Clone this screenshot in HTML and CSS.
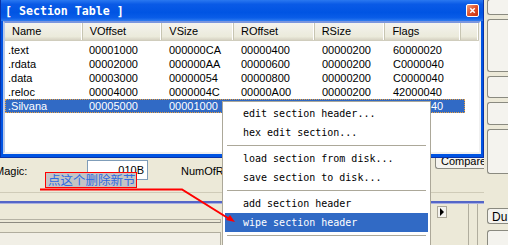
FILE: index.html
```html
<!DOCTYPE html>
<html>
<head>
<meta charset="utf-8">
<link rel="stylesheet" href="styles.css">
</head>
<body>
<div class="app">
  <div class="main">
    <div class="win">
      <div class="titlebar">
        <span class="title">[ Section Table ]</span>
        <span class="close"><svg width="12" height="12" viewBox="0 0 12 12"><path d="M3 3 L9 9 M9 3 L3 9" stroke="#fff" stroke-width="2" fill="none"/></svg></span>
      </div>
      <div class="list">
        <div class="hdr">
          <div class="hc w1">Name</div><div class="hc w2">VOffset</div><div class="hc w3">VSize</div><div class="hc w4">ROffset</div><div class="hc w5">RSize</div><div class="hc w6">Flags</div><div class="hc w7"></div>
        </div>
        <div class="row"><span class="w1">.text</span><span class="w2">00001000</span><span class="w3">000000CA</span><span class="w4">00000400</span><span class="w5">00000200</span><span class="w6">60000020</span></div>
        <div class="row"><span class="w1">.rdata</span><span class="w2">00002000</span><span class="w3">000000AA</span><span class="w4">00000600</span><span class="w5">00000200</span><span class="w6">C0000040</span></div>
        <div class="row"><span class="w1">.data</span><span class="w2">00003000</span><span class="w3">00000054</span><span class="w4">00000800</span><span class="w5">00000200</span><span class="w6">C0000040</span></div>
        <div class="row"><span class="w1">.reloc</span><span class="w2">00004000</span><span class="w3">0000004C</span><span class="w4">00000A00</span><span class="w5">00000200</span><span class="w6">42000040</span></div>
        <div class="row sel"><span class="w1">.Silvana</span><span class="w2">00005000</span><span class="w3">00001000</span><span class="w4">00000C00</span><span class="w5">00000200</span><span class="w6">E0000040</span></div>
      </div>
    </div>
    <div class="panel">
      <div class="fields">
        <span class="lbl">Magic:</span>
        <span class="input">010B</span>
        <span class="lbl2">NumOfRvaAndSizes:</span>
        <span class="cmp">Compare</span>
      </div>
      <div class="bluebar"></div>
      <div class="bottom">
        <div class="bl">
          <div class="grooves"></div>
          <div class="lower"></div>
        </div>
        <div class="bmid"></div>
        <div class="br">
          <span class="arr"><svg width="6" height="8" viewBox="0 0 6 8"><path d="M1 0 L5 4 L1 8 Z" fill="#000"/></svg></span>
          <span class="vl v1"></span>
          <span class="vl v2"></span>
        </div>
      </div>
    </div>
  </div>
  <div class="side">
    <div class="sbtn b1"></div>
    <div class="sbtn b2"></div>
    <div class="sbtn b3"></div>
    <div class="sbtn b4"></div>
    <div class="sbtn b5"></div>
    <div class="sbtn b6">Du</div>
    <div class="sbtn b7"></div>
  </div>
</div>

<div class="menu">
  <div class="mi">edit section header...</div>
  <div class="mi">hex edit section...</div>
  <div class="msep"></div>
  <div class="mi">load section from disk...</div>
  <div class="mi">save section to disk...</div>
  <div class="msep"></div>
  <div class="mi">add section header</div>
  <div class="mi hot">wipe section header</div>
  <div class="msep"></div>
  <div class="mi">&nbsp;</div>
</div>

<div class="note">点这个删除新节</div>
<svg class="arrow" width="508" height="245" viewBox="0 0 508 245">
  <polyline points="40,189.5 182,189.5 231,220" fill="none" stroke="#f00" stroke-width="2"/>
  <polygon points="235,222 226,220 230,215" fill="#f00"/>
</svg>
</body>
</html>
```

FILE: styles.css
```css
* { box-sizing: border-box; }
html, body { margin: 0; padding: 0; }
body {
  width: 508px;
  height: 245px;
  overflow: hidden;
  background: #ece9d8;
  font-family: "Liberation Sans", Arial, sans-serif;
  font-size: 11px;
  color: #000;
  position: relative;
}
.app { display: flex; width: 508px; height: 245px; }
.main { width: 484px; display: flex; flex-direction: column; }
.win {
  position: relative;
  z-index: 2;
  height: 158px;
  background: #0054e3;
  border: 1px solid #0831a8;
  border-top: none;
  display: flex;
  flex-direction: column;
  padding: 0 2px 3px 2px;
}
.titlebar {
  height: 21px;
  margin: 0 -2px;
  background: linear-gradient(#2a78f0 0%, #0a5ae6 20%, #0054e3 60%, #0a5de8 85%, #2f7cf0 100%);
  display: flex;
  align-items: center;
  justify-content: space-between;
  padding: 0 4px 0 4px;
}
.title {
  font-family: "DejaVu Sans Mono", monospace;
  font-weight: bold;
  font-size: 11.6px;
  color: #fff;
  white-space: pre;
}
.close {
  width: 13px; height: 13px;
  background: linear-gradient(135deg, #f0a080, #e0502a 50%, #c83010);
  border: 1px solid #fff;
  border-radius: 2px;
  display: flex; align-items: center; justify-content: center;
}
.close svg { width: 9px; height: 9px; }
.list {
  flex: 1;
  background: #fff;
  border: 2px solid;
  border-color: #7a96df #f0f0f0 #f0f0f0 #b8c8e8;
  overflow: hidden;
}
.hdr {
  display: flex;
  height: 18px;
  background: linear-gradient(#f4f3ee, #ebeadb 80%, #d6d2c2);
  border-bottom: 1px solid #d0cdbd;
}
.hc {
  padding-left: 7px;
  line-height: 17px;
  border-right: 1px solid #c7c5b2;
  box-shadow: inset -1px 0 0 #fff;
}
.w1 { width: 78px; }
.w2 { width: 80px; }
.w3 { width: 72px; }
.w4 { width: 81px; }
.w5 { width: 71px; }
.w6 { width: 76px; }
.w7 { width: 18px; }
.row {
  display: flex;
  height: 14px;
  line-height: 14px;
  width: 460px;
}
.hdr + .row { margin-top: 2px; }
.row span { padding-left: 6px; white-space: nowrap; }
.row span.w1 { padding-left: 3px; }
.row.sel {
  background: #316ac5;
  color: #fff;
  outline: 1px dotted #e8a040;
  outline-offset: -1px;
}
.panel { flex: 1; display: flex; flex-direction: column; }
.fields {
  height: 35px;
  display: flex;
  align-items: flex-start;
  border-bottom: 1px solid #cfcbb8;
}
.lbl { margin-left: -5px; margin-top: 7px; width: 92px; }
.input {
  margin-top: 2px;
  width: 61px;
  height: 20px;
  background: #fff;
  border: 1px solid #7f9db9;
  text-align: right;
  padding-right: 3px;
  line-height: 18px;
}
.lbl2 { margin-left: 33px; margin-top: 7px; white-space: nowrap; }
.cmp {
  margin-left: auto;
  margin-top: -12px;
  width: 49px;
  height: 23px;
  background: #f4f3ee;
  border: 1px solid #8a8a80;
  border-right: none;
  border-radius: 3px 0 0 3px;
  padding: 8px 0 0 5px;
  line-height: 12px;
  white-space: nowrap;
  overflow: hidden;
}
.bluebar {
  margin-top: 8px;
  height: 3px;
  border-top: 2px solid #5466c8;
  border-bottom: 1px solid #a9b0e0;
}
.bottom { flex: 1; display: flex; }
.bl {
  width: 221px;
  display: flex;
  flex-direction: column;
}
.grooves {
  margin-top: 15px;
  height: 4px;
  border-top: 1px solid #b5b2a4;
  border-bottom: 1px solid #8c8a80;
  border-right: 1px solid #b5b2a4;
}
.lower {
  margin-top: 9px;
  border-top: 1px solid #b0ad9e;
  border-right: 1px solid #b0ad9e;
  flex: 1;
  background: #f1efe6;
}
.bmid { flex: 1; }
.br {
  width: 52px;
  display: flex;
  align-items: flex-start;
  padding-left: 5px;
}
.arr {
  margin-top: 2px;
  width: 10px;
  height: 12px;
  background: #f4f3ee;
  border: 1px solid #aca899;
  display: flex;
  align-items: center;
  justify-content: center;
}
.vl {
  align-self: stretch;
  width: 1px;
  background: #b0ad9e;
}
.v1 { margin-left: 21px; }
.v2 { margin-left: 8px; }
.side {
  width: 24px;
  display: flex;
  flex-direction: column;
  padding: 0 0 0 3px;
  gap: 4px;
}
.sbtn {
  background: #f4f3ee;
  border: 1px solid #8a8a80;
  border-right: none;
  border-radius: 3px 0 0 3px;
  font-size: 12px;
  padding: 2px 4px;
  flex-shrink: 0;
}
.b1 { height: 16px; margin-top: -1px; }
.b2 { height: 53px; }
.b3 { height: 22px; }
.b4 { height: 23px; }
.b5 { height: 45px; }
.b6 { height: 16px; margin-top: 30px; line-height: 12px; }
.b7 { height: 20px; margin-top: 2px; }

.menu {
  position: absolute;
  z-index: 10;
  left: 222px;
  top: 101px;
  width: 209px;
  height: 160px;
  background: #fff;
  border: 1px solid #aca899;
  padding: 2px 2px;
  font-family: "DejaVu Sans Mono", monospace;
  font-size: 10px;
}
.mi {
  height: 19px;
  line-height: 19px;
  padding-left: 18px;
  white-space: pre;
}
.mi.hot { background: #316ac5; color: #fff; }
.msep {
  height: 8px;
  border-bottom: 1px solid #aca899;
  margin: 0 2px 0 2px;
  transform: translateY(-4px);
  margin-bottom: -1px;
}
.note {
  position: absolute;
  z-index: 11;
  left: 45px;
  top: 172px;
  width: 92px;
  height: 16px;
  border: 1px solid #f00;
  background: #c4c4c4;
  color: #2f6be0;
  font-family: "Noto Sans CJK SC", sans-serif;
  font-size: 12.5px;
  line-height: 14px;
  padding-left: 2px;
  white-space: nowrap;
}
.arrow { position: absolute; z-index: 12; left: 0; top: 0; pointer-events: none; }
```
